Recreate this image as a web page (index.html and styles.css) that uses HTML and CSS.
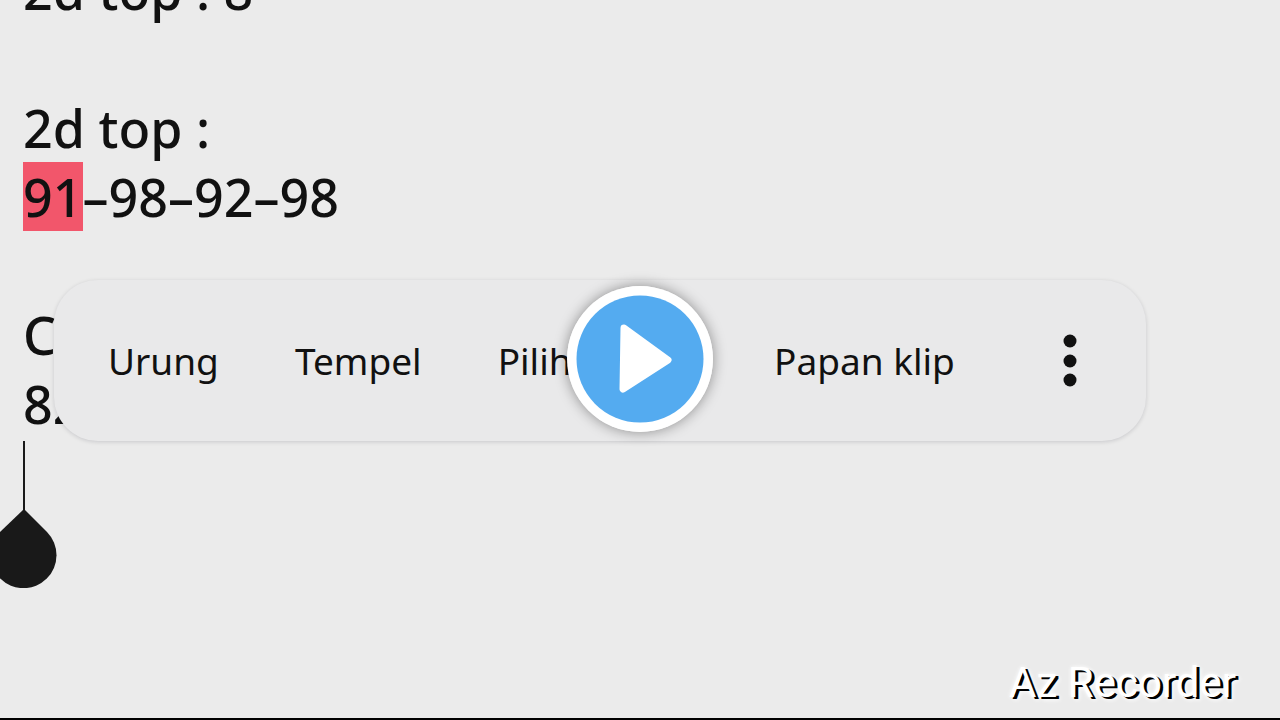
FILE: index.html
```
<!DOCTYPE html>
<html lang="id">
<head>
    <meta charset="UTF-8">
    <meta name="viewport" content="width=device-width, initial-scale=1.0">
    <title>Az Recorder</title>
    <link rel="stylesheet" href="styles.css">
</head>
<body>
    <main class="player">
        <div class="note">
            <p>2d top : 8</p>
            <p class="blank"></p>
            <p>2d top :</p>
            <p><mark>91</mark>–98–92–98</p>
            <p class="blank"></p>
            <p>C</p>
            <p>82</p>
            <svg class="cursor" width="57" height="150" viewBox="0 0 57 150">
                <path d="M23 3h2v70h-2z"/>
                <path d="M24 71L47 94A33 33 0 1 1 0 94Z"/>
            </svg>
        </div>

        <div class="toolbar">
            <button>Urung</button>
            <button>Tempel</button>
            <button>Pilih semua</button>
            <button>Papan klip</button>
            <button class="more" aria-label="Lainnya">
                <svg width="14" height="54" viewBox="0 0 14 54">
                    <circle cx="7" cy="7" r="6.5"/>
                    <circle cx="7" cy="27" r="6.5"/>
                    <circle cx="7" cy="46" r="6.5"/>
                </svg>
            </button>
        </div>

        <button class="play" aria-label="Putar">
            <svg width="146" height="146" viewBox="0 0 146 146">
                <circle cx="73" cy="73" r="73" fill="#fff"/>
                <circle cx="73" cy="73" r="63.5" fill="#54abf0"/>
                <path d="M57 42L101 74L56 103Z" fill="#fff" stroke="#fff" stroke-width="7" stroke-linejoin="round"/>
            </svg>
        </button>

        <div class="watermark">Az Recorder</div>
    </main>
</body>
</html>
```
FILE: styles.css
```
body {
    margin: 0;
    font-family: "Noto Sans", sans-serif;
    background-color: #ebebeb;
    color: #111;
}
.player {
    position: relative;
    box-sizing: border-box;
    height: 100vh;
    overflow: hidden;
    border-bottom: 2px solid #000;
}
.note {
    margin-top: -45px;
    font-size: 52px;
    font-weight: 500;
    line-height: 69px;
}
.note p {
    margin: 0;
    padding-left: 23px;
}
.note .blank {
    height: 69px;
}
mark {
    display: inline-block;
    background-color: #f2566b;
    color: inherit;
}
.cursor {
    display: block;
    fill: #191919;
}
button {
    padding: 0;
    border: none;
    background: none;
    color: inherit;
    font: inherit;
    cursor: pointer;
}
.toolbar {
    position: absolute;
    top: 280px;
    left: 54px;
    right: 134px;
    box-sizing: border-box;
    height: 161px;
    padding: 0 69px 0 54px;
    display: flex;
    align-items: center;
    justify-content: space-between;
    border-radius: 44px;
    background-color: #e9e9ea;
    box-shadow: 0 1px 4px rgba(0, 0, 30, 0.15);
    font-size: 37px;
}
.more {
    display: flex;
    margin-left: 32px;
    fill: #111;
}
.play {
    position: absolute;
    top: 50%;
    left: 50%;
    display: flex;
    transform: translate(-50%, -50%);
    border-radius: 50%;
    box-shadow: 0 0 14px rgba(0, 0, 0, 0.4);
}
.watermark {
    position: absolute;
    right: 44px;
    bottom: 11px;
    font-family: Roboto, sans-serif;
    font-size: 42px;
    line-height: 48px;
    color: #fff;
    text-shadow: 3px 2px 0 #000, 0 0 4px #fff, 4px 3px 4px #fff;
}
```
